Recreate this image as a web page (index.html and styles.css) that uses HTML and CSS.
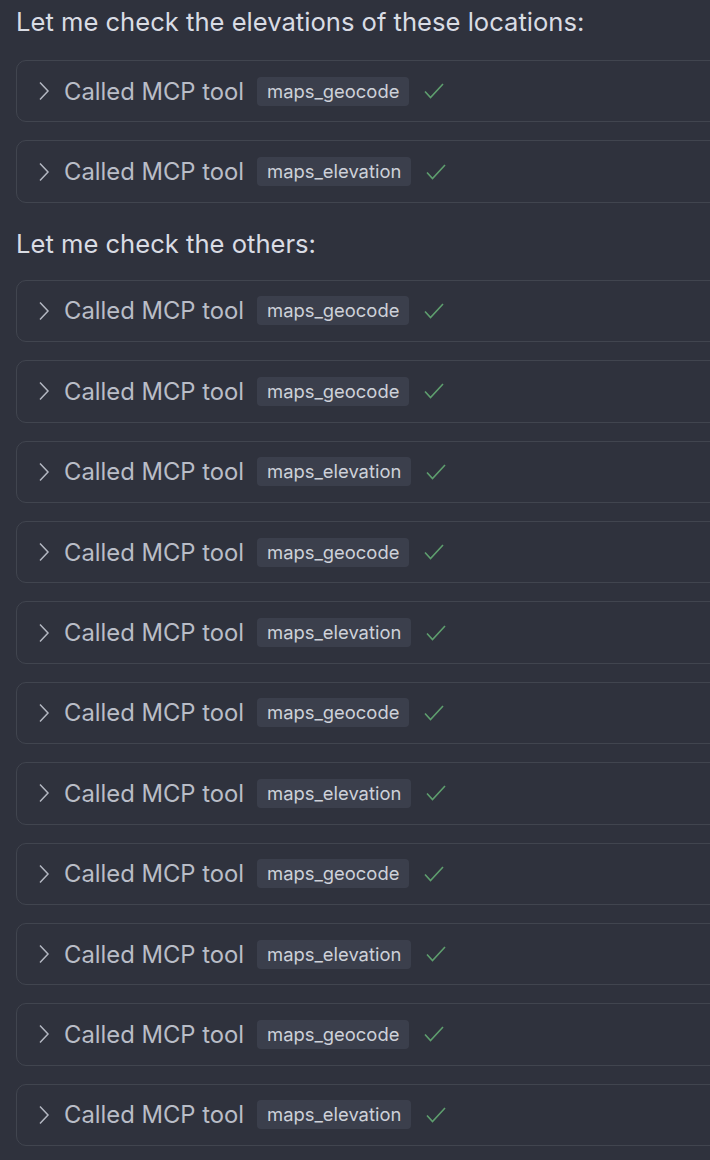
FILE: index.html
```html
<!DOCTYPE html>
<html>
<head>
<meta charset="utf-8">
<link rel="stylesheet" href="styles.css">
</head>
<body>
<div class="thread">
  <p class="msg msg-first">Let me check the elevations of these locations:</p>
  <div class="calls">
    <div class="call"><svg class="chev" viewBox="0 0 12 20"><path d="M2 1.5 L10 10 L2 18.5"/></svg><span class="label">Called MCP tool</span><span class="badge">maps_geocode</span><svg class="check" viewBox="0 0 20 16"><path d="M1 8.5 L6.5 14.5 L19 1"/></svg></div>
    <div class="call"><svg class="chev" viewBox="0 0 12 20"><path d="M2 1.5 L10 10 L2 18.5"/></svg><span class="label">Called MCP tool</span><span class="badge">maps_elevation</span><svg class="check" viewBox="0 0 20 16"><path d="M1 8.5 L6.5 14.5 L19 1"/></svg></div>
  </div>
  <p class="msg">Let me check the others:</p>
  <div class="calls">
    <div class="call"><svg class="chev" viewBox="0 0 12 20"><path d="M2 1.5 L10 10 L2 18.5"/></svg><span class="label">Called MCP tool</span><span class="badge">maps_geocode</span><svg class="check" viewBox="0 0 20 16"><path d="M1 8.5 L6.5 14.5 L19 1"/></svg></div>
    <div class="call"><svg class="chev" viewBox="0 0 12 20"><path d="M2 1.5 L10 10 L2 18.5"/></svg><span class="label">Called MCP tool</span><span class="badge">maps_geocode</span><svg class="check" viewBox="0 0 20 16"><path d="M1 8.5 L6.5 14.5 L19 1"/></svg></div>
    <div class="call"><svg class="chev" viewBox="0 0 12 20"><path d="M2 1.5 L10 10 L2 18.5"/></svg><span class="label">Called MCP tool</span><span class="badge">maps_elevation</span><svg class="check" viewBox="0 0 20 16"><path d="M1 8.5 L6.5 14.5 L19 1"/></svg></div>
    <div class="call"><svg class="chev" viewBox="0 0 12 20"><path d="M2 1.5 L10 10 L2 18.5"/></svg><span class="label">Called MCP tool</span><span class="badge">maps_geocode</span><svg class="check" viewBox="0 0 20 16"><path d="M1 8.5 L6.5 14.5 L19 1"/></svg></div>
    <div class="call"><svg class="chev" viewBox="0 0 12 20"><path d="M2 1.5 L10 10 L2 18.5"/></svg><span class="label">Called MCP tool</span><span class="badge">maps_elevation</span><svg class="check" viewBox="0 0 20 16"><path d="M1 8.5 L6.5 14.5 L19 1"/></svg></div>
    <div class="call"><svg class="chev" viewBox="0 0 12 20"><path d="M2 1.5 L10 10 L2 18.5"/></svg><span class="label">Called MCP tool</span><span class="badge">maps_geocode</span><svg class="check" viewBox="0 0 20 16"><path d="M1 8.5 L6.5 14.5 L19 1"/></svg></div>
    <div class="call"><svg class="chev" viewBox="0 0 12 20"><path d="M2 1.5 L10 10 L2 18.5"/></svg><span class="label">Called MCP tool</span><span class="badge">maps_elevation</span><svg class="check" viewBox="0 0 20 16"><path d="M1 8.5 L6.5 14.5 L19 1"/></svg></div>
    <div class="call"><svg class="chev" viewBox="0 0 12 20"><path d="M2 1.5 L10 10 L2 18.5"/></svg><span class="label">Called MCP tool</span><span class="badge">maps_geocode</span><svg class="check" viewBox="0 0 20 16"><path d="M1 8.5 L6.5 14.5 L19 1"/></svg></div>
    <div class="call"><svg class="chev" viewBox="0 0 12 20"><path d="M2 1.5 L10 10 L2 18.5"/></svg><span class="label">Called MCP tool</span><span class="badge">maps_elevation</span><svg class="check" viewBox="0 0 20 16"><path d="M1 8.5 L6.5 14.5 L19 1"/></svg></div>
    <div class="call"><svg class="chev" viewBox="0 0 12 20"><path d="M2 1.5 L10 10 L2 18.5"/></svg><span class="label">Called MCP tool</span><span class="badge">maps_geocode</span><svg class="check" viewBox="0 0 20 16"><path d="M1 8.5 L6.5 14.5 L19 1"/></svg></div>
    <div class="call"><svg class="chev" viewBox="0 0 12 20"><path d="M2 1.5 L10 10 L2 18.5"/></svg><span class="label">Called MCP tool</span><span class="badge">maps_elevation</span><svg class="check" viewBox="0 0 20 16"><path d="M1 8.5 L6.5 14.5 L19 1"/></svg></div>
  </div>
</div>
</body>
</html>
```

FILE: styles.css
```css
html, body {
  margin: 0;
  padding: 0;
  background: #2f323d;
  overflow: hidden;
  height: 100%;
}
body {
  font-family: Inter, "Noto Sans", sans-serif;
}
.thread {
  padding-left: 16px;
}
.msg {
  margin: 0;
  color: #d9dce4;
  font-size: 25.6px;
  line-height: 28px;
  padding-top: 27px;
  padding-bottom: 22px;
}
.msg-first {
  padding-top: 8px;
  padding-bottom: 24px;
}
.calls {
  display: flex;
  flex-direction: column;
  gap: 18px;
  margin-right: -40px;
}
.call {
  box-sizing: border-box;
  height: 62.4px;
  border: 1.5px solid #41454f;
  border-radius: 10px;
  display: flex;
  align-items: center;
  padding-left: 21px;
}
.chev {
  width: 12px;
  height: 20px;
  fill: none;
  stroke: #b3b7c1;
  stroke-width: 1.5;
  margin-right: 14px;
}
.label {
  color: #b9bdc7;
  font-size: 23.8px;
  margin-right: 13px;
}
.badge {
  background: #3b3f4c;
  color: #cdd1d9;
  font-size: 18.4px;
  border-radius: 4px;
  padding: 0 10px;
  height: 29px;
  line-height: 29px;
  margin-right: 15px;
}
.check {
  width: 20px;
  height: 16px;
  fill: none;
  stroke: #5e9e6e;
  stroke-width: 1.6;
}
```
